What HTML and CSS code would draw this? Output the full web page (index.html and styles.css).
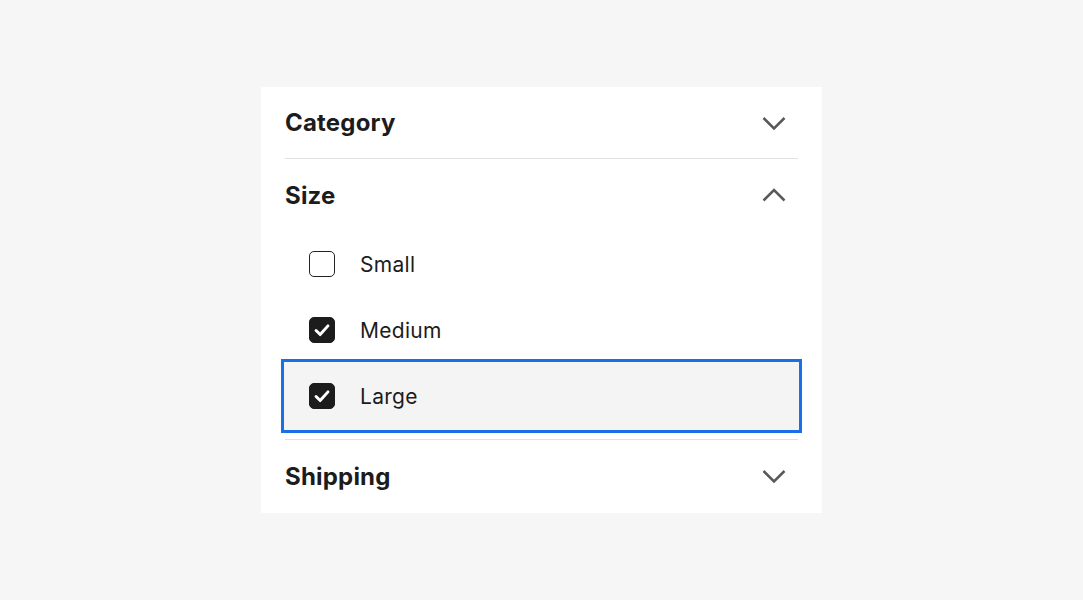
FILE: index.html
```html
<!DOCTYPE html>
<html>
<head>
<meta charset="utf-8">
<link rel="stylesheet" href="styles.css">
</head>
<body>
<div class="panel">
  <div class="section">
    <div class="header">
      <span class="title">Category</span>
      <svg class="chev" viewBox="0 0 24 24"><path d="M1.5 7 L12 17.5 L22.5 7"/></svg>
    </div>
  </div>
  <div class="section open">
    <div class="header">
      <span class="title">Size</span>
      <svg class="chev" viewBox="0 0 24 24"><path d="M1.5 17.5 L12 7 L22.5 17.5"/></svg>
    </div>
    <div class="options">
      <div class="option">
        <span class="box"></span>
        <span class="label">Small</span>
      </div>
      <div class="option">
        <span class="box checked"><svg viewBox="0 0 24 24"><path d="M5.5 12.5 L10 17 L18.5 7.5"/></svg></span>
        <span class="label">Medium</span>
      </div>
      <div class="option focused">
        <span class="box checked"><svg viewBox="0 0 24 24"><path d="M5.5 12.5 L10 17 L18.5 7.5"/></svg></span>
        <span class="label">Large</span>
      </div>
    </div>
  </div>
  <div class="section last">
    <div class="header">
      <span class="title">Shipping</span>
      <svg class="chev" viewBox="0 0 24 24"><path d="M1.5 7 L12 17.5 L22.5 7"/></svg>
    </div>
  </div>
</div>
</body>
</html>
```

FILE: styles.css
```css
html, body {
  margin: 0;
  padding: 0;
}
body {
  background: #f6f6f6;
  min-height: 100vh;
  display: flex;
  align-items: center;
  justify-content: center;
  font-family: Inter, "Noto Sans", sans-serif;
  color: #222;
}
.panel {
  width: 513px;
  padding: 0 24px 1px;
  background: #fff;
}
.section {
  border-bottom: 1px solid #e1e1e1;
}
.section.last {
  border-bottom: none;
}
.section.open {
  padding-bottom: 10px;
}
.header {
  height: 71px;
  display: flex;
  align-items: center;
  justify-content: space-between;
}
.section.open .header,
.section.last .header {
  height: 72px;
}
.title {
  font-size: 24px;
  font-weight: 700;
  letter-spacing: 0.2px;
  color: #1c1c1c;
}
.chev {
  width: 24px;
  height: 24px;
  margin-right: 12px;
  fill: none;
  stroke: #595959;
  stroke-width: 2.5;
}
.options {
  display: flex;
  flex-direction: column;
}
.option {
  height: 66px;
  display: flex;
  align-items: center;
  padding-left: 24px;
  gap: 25px;
}
.option.focused {
  background: #f4f4f4;
  outline: 3px solid #1a6fe6;
  outline-offset: 1px;
  box-shadow: 0 0 0 1px #f4f4f4;
}
.box {
  width: 26px;
  height: 26px;
  box-sizing: border-box;
  border: 1.5px solid #222;
  border-radius: 5px;
  background: #fff;
  display: flex;
  align-items: center;
  justify-content: center;
}
.box.checked {
  background: #1c1c1c;
  border-color: #1c1c1c;
}
.box svg {
  width: 22px;
  height: 22px;
  fill: none;
  stroke: #fff;
  stroke-width: 3.2;
  stroke-linecap: round;
  stroke-linejoin: round;
}
.label {
  font-size: 21px;
  font-weight: 400;
  letter-spacing: 0.3px;
  color: #1c1c1c;
}
```
